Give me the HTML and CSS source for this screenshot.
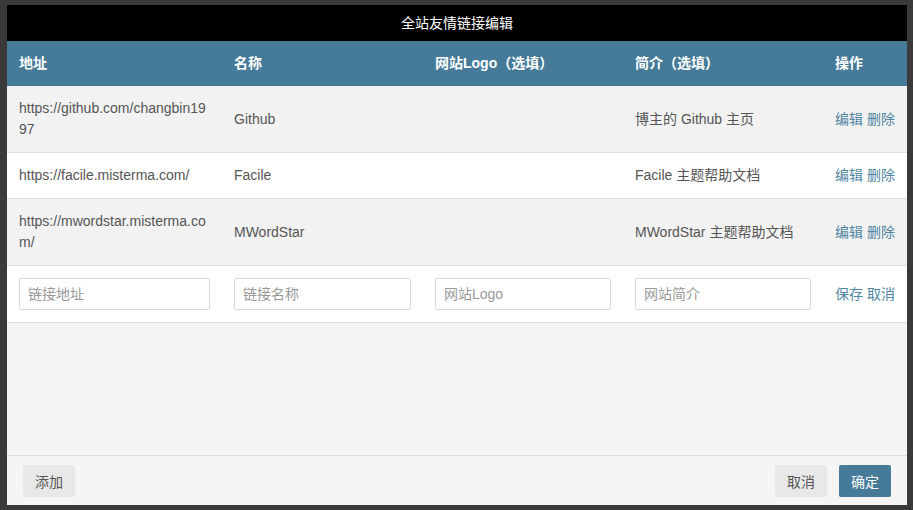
FILE: index.html
```html
<!DOCTYPE html>
<html lang="zh-CN">
<head>
    <meta charset="UTF-8">
    <meta name="viewport" content="width=device-width, initial-scale=1.0">
    <title>全站友情链接编辑</title>
    <link rel="stylesheet" href="styles.css">
</head>
<body>
    <div class="backdrop">
        <div class="modal">
            <div class="modal-title">全站友情链接编辑</div>
            <div class="modal-body">
                <table class="links">
                    <colgroup>
                        <col class="c-url">
                        <col class="c-name">
                        <col class="c-logo">
                        <col class="c-desc">
                        <col class="c-op">
                    </colgroup>
                    <thead>
                        <tr>
                            <th>地址</th>
                            <th>名称</th>
                            <th>网站Logo（选填）</th>
                            <th>简介（选填）</th>
                            <th>操作</th>
                        </tr>
                    </thead>
                    <tbody>
                        <tr class="odd">
                            <td class="url">https://github.com/changbin1997</td>
                            <td>Github</td>
                            <td></td>
                            <td>博主的 Github 主页</td>
                            <td><a href="#">编辑</a> <a href="#">删除</a></td>
                        </tr>
                        <tr>
                            <td class="url">https://facile.misterma.com/</td>
                            <td>Facile</td>
                            <td></td>
                            <td>Facile 主题帮助文档</td>
                            <td><a href="#">编辑</a> <a href="#">删除</a></td>
                        </tr>
                        <tr class="odd">
                            <td class="url">https://mwordstar.misterma.com/</td>
                            <td>MWordStar</td>
                            <td></td>
                            <td>MWordStar 主题帮助文档</td>
                            <td><a href="#">编辑</a> <a href="#">删除</a></td>
                        </tr>
                        <tr class="edit-row">
                            <td><input type="text" placeholder="链接地址"></td>
                            <td><input type="text" placeholder="链接名称"></td>
                            <td><input type="text" placeholder="网站Logo"></td>
                            <td><input type="text" placeholder="网站简介"></td>
                            <td><a href="#">保存</a> <a href="#">取消</a></td>
                        </tr>
                    </tbody>
                </table>
            </div>
            <div class="modal-footer">
                <button class="btn">添加</button>
                <div class="spacer"></div>
                <button class="btn">取消</button>
                <button class="btn primary">确定</button>
            </div>
        </div>
    </div>
</body>
</html>
```

FILE: styles.css
```css
* {
    margin: 0;
    padding: 0;
    box-sizing: border-box;
    font-family: "Liberation Sans", "Noto Sans CJK SC", sans-serif;
}

body {
    background-color: #3a3a3a;
    height: 100vh;
    overflow: hidden;
}

.backdrop {
    padding: 5px 6px 5px 7px;
}

.modal {
    width: 900px;
    height: 500px;
    background-color: #f5f5f4;
    display: flex;
    flex-direction: column;
}

.modal-title {
    height: 36px;
    line-height: 36px;
    background-color: #000;
    color: #fff;
    font-size: 14px;
    text-align: center;
}

.modal-body {
    flex: 1;
}

.links {
    width: 100%;
    border-collapse: collapse;
    table-layout: fixed;
    font-size: 14px;
    color: #555;
}

.c-url { width: 215px; }
.c-name { width: 201px; }
.c-logo { width: 200px; }
.c-desc { width: 200px; }
.c-op { width: 84px; }

.links th {
    background-color: #457b98;
    color: #fff;
    font-weight: bold;
    text-align: left;
    padding: 12px 12px 13px 12px;
    line-height: 20px;
}

.links td {
    padding: 12px;
    line-height: 21px;
    vertical-align: middle;
    border-bottom: 1px solid #dedede;
    background-color: #fff;
}

.links tr.odd td {
    background-color: #f2f2f2;
}

.links td.url {
    word-break: break-all;
}

.links a {
    color: #4f85a3;
    text-decoration: none;
}

.edit-row td {
    padding: 12px;
}

.edit-row input {
    width: 100%;
    height: 32px;
    border: 1px solid #d9d9d9;
    border-radius: 2px;
    padding: 0 8px;
    font-size: 14px;
    color: #555;
    background-color: #fff;
    outline: none;
}

.edit-row input::placeholder {
    color: #999;
}

.modal-footer {
    border-top: 1px solid #dcdcdc;
    display: flex;
    align-items: center;
    gap: 12px;
    padding: 9px 16px 8px 16px;
}

.spacer {
    flex: 1;
}

.btn {
    width: 52px;
    height: 32px;
    border: none;
    border-radius: 2px;
    background-color: #e8e8e8;
    color: #555;
    font-size: 14px;
    cursor: pointer;
}

.btn.primary {
    background-color: #457b98;
    color: #fff;
}
```
